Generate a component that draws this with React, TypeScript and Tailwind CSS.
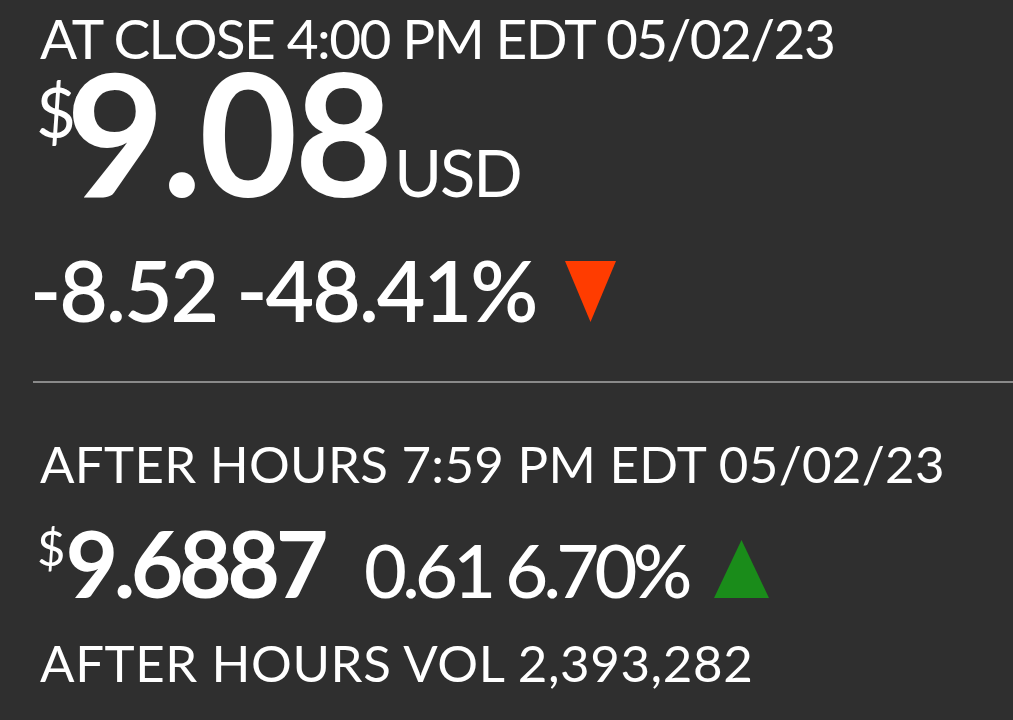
export default function App() {
  return (
    <div
      className="w-[1013px] h-[720px] overflow-hidden bg-[#2f2f2f] text-white"
      style={{ fontFamily: "Lato, 'Noto Sans', sans-serif" }}
    >
      <div className="pl-[40px] flex flex-col">
        <div className="h-[77px] leading-[77px] text-[55px] font-normal tracking-[-1.6px] whitespace-nowrap">
          AT CLOSE 4:00 PM EDT 05/02/23
        </div>
        <div className="h-[108px] flex items-start">
          <span className="text-[69px] leading-none font-normal ml-[-4px]">$</span>
          <div className="flex items-baseline h-[108px] ml-[-10px]">
            <span className="text-[170px] leading-[108px] font-bold tracking-[-3px]">9.08</span>
            <span className="text-[65px] leading-none font-normal tracking-[-2px] ml-[4px]">USD</span>
          </div>
        </div>
        <div className="mt-[55px] h-[100px] flex items-baseline">
          <span className="text-[84px] leading-[100px] font-semibold tracking-[-2px] ml-[-10px]">-8.52 -48.41%</span>
          <svg width="51" height="61" viewBox="0 0 51 61" className="ml-[29px] mb-[-3px]">
            <polygon points="0,0 51,0 25.5,61" fill="#ff3c00" />
          </svg>
        </div>
        <div className="mt-[41px] h-[2px] bg-[#8a8a8a] ml-[-7px]" />
        <div className="mt-[51px] h-[60px] leading-[60px] text-[51px] font-normal tracking-[0.3px] whitespace-nowrap">
          AFTER HOURS 7:59 PM EDT 05/02/23
        </div>
        <div className="mt-[29px] h-[80px] flex items-start">
          <span className="text-[49px] leading-none font-normal ml-[-3px]">$</span>
          <div className="flex items-baseline h-[80px]">
            <span className="text-[91px] leading-[80px] font-bold tracking-[-4.5px]">9.6887</span>
            <span className="text-[74px] leading-none font-medium tracking-[-4.7px] ml-[40px]">0.61 6.70%</span>
            <svg width="55" height="58" viewBox="0 0 55 58" className="ml-[26px]">
              <polygon points="27.5,0 55,58 0,58" fill="#1a8c1a" />
            </svg>
          </div>
        </div>
        <div className="mt-[30px] h-[60px] leading-[60px] text-[51px] font-normal tracking-[0.6px] whitespace-nowrap">
          AFTER HOURS VOL 2,393,282
        </div>
      </div>
    </div>
  );
}
